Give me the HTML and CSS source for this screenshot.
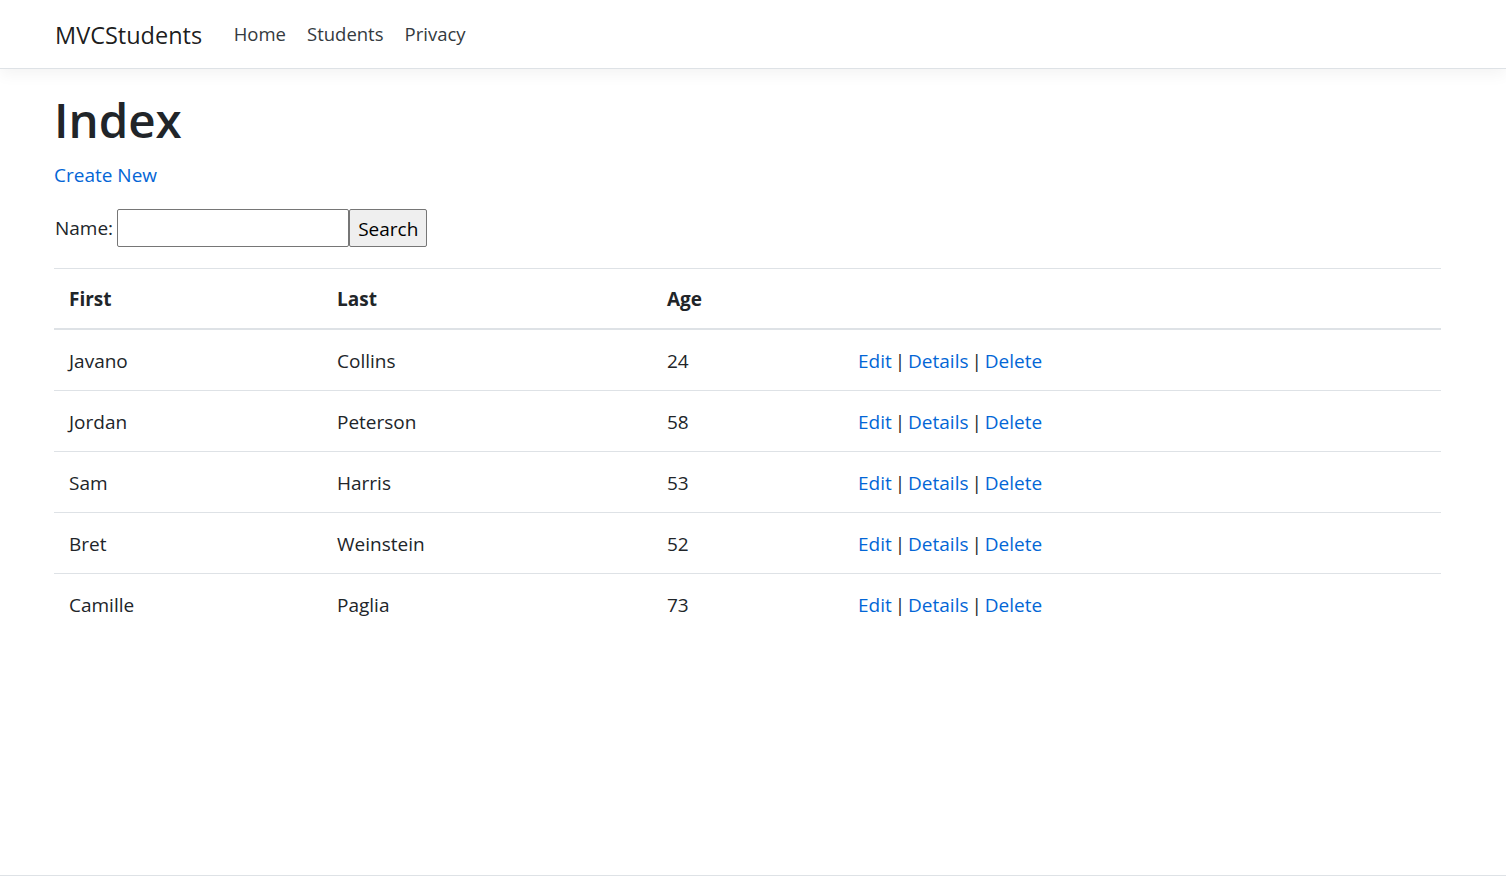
FILE: index.html
```html
<!DOCTYPE html>
<html lang="en">
<head>
<meta charset="utf-8">
<title>Index - MVCStudents</title>
<link rel="stylesheet" href="styles.css">
</head>
<body>
<header class="site-header">
  <nav class="navbar">
    <a class="brand" href="#">MVCStudents</a>
    <ul class="nav-list">
      <li><a class="nav-link" href="#">Home</a></li>
      <li><a class="nav-link" href="#">Students</a></li>
      <li><a class="nav-link" href="#">Privacy</a></li>
    </ul>
  </nav>
</header>
<main class="container">
  <h1 class="page-title">Index</h1>
  <p class="create"><a class="link" href="#">Create New</a></p>
  <form class="search-form">
    <label class="search-label">Name:</label>
    <input class="search-input" type="text">
    <button class="search-btn" type="button">Search</button>
  </form>
  <table class="data-table">
    <thead>
      <tr>
        <th class="col-first">First</th>
        <th class="col-last">Last</th>
        <th class="col-age">Age</th>
        <th class="col-act"></th>
      </tr>
    </thead>
    <tbody>
      <tr><td>Javano</td><td>Collins</td><td>24</td><td class="actions"><a class="link" href="#">Edit</a> | <a class="link" href="#">Details</a> | <a class="link" href="#">Delete</a></td></tr>
      <tr><td>Jordan</td><td>Peterson</td><td>58</td><td class="actions"><a class="link" href="#">Edit</a> | <a class="link" href="#">Details</a> | <a class="link" href="#">Delete</a></td></tr>
      <tr><td>Sam</td><td>Harris</td><td>53</td><td class="actions"><a class="link" href="#">Edit</a> | <a class="link" href="#">Details</a> | <a class="link" href="#">Delete</a></td></tr>
      <tr><td>Bret</td><td>Weinstein</td><td>52</td><td class="actions"><a class="link" href="#">Edit</a> | <a class="link" href="#">Details</a> | <a class="link" href="#">Delete</a></td></tr>
      <tr><td>Camille</td><td>Paglia</td><td>73</td><td class="actions"><a class="link" href="#">Edit</a> | <a class="link" href="#">Details</a> | <a class="link" href="#">Delete</a></td></tr>
    </tbody>
  </table>
</main>
<footer class="site-footer"></footer>
</body>
</html>
```
FILE: styles.css
```css
html, body {
  margin: 0;
  padding: 0;
  height: 100%;
}
body {
  font-family: "Open Sans", "Noto Sans", sans-serif;
  font-size: 19px;
  line-height: 30px;
  color: #212529;
  background: #fff;
  position: relative;
  overflow: hidden;
}
.site-header {
  background: #fff;
  border-bottom: 1px solid #dee2e6;
  box-shadow: 0 5px 15px rgba(0,0,0,0.05);
  position: relative;
  z-index: 1;
}
.navbar {
  display: flex;
  align-items: center;
  height: 68px;
  padding-left: 55px;
  box-sizing: border-box;
}
.brand {
  font-size: 23.5px;
  color: rgba(0,0,0,0.9);
  text-decoration: none;
  margin-right: 21px;
  margin-top: 2px;
}
.nav-list {
  display: flex;
  list-style: none;
  margin: 0;
  padding: 0;
  font-size: 18.5px;
}
.nav-link {
  display: block;
  padding: 0 10.5px;
  color: #343a40;
  text-decoration: none;
}
.container {
  padding: 21px 0 0 54px;
  width: 1387px;
}
.page-title {
  font-size: 47.5px;
  font-weight: 600;
  line-height: 60px;
  margin: 0 0 10px;
}
.create {
  margin: 0 0 20px;
}
.link {
  color: #0366d6;
  text-decoration: none;
}
.search-form {
  display: flex;
  align-items: center;
  margin: -1px 0 21px 1px;
  height: 38px;
}
.search-label {
  margin-right: 4px;
}
.search-input {
  width: 232px;
  height: 38px;
  box-sizing: border-box;
  border: 1px solid #767676;
  border-radius: 2px;
  margin: 0;
  font: inherit;
}
.search-btn {
  height: 38px;
  box-sizing: border-box;
  padding: 1px 8px 0;
  margin: 0;
  border: 1px solid #767676;
  border-radius: 2px;
  background: #efefef;
  font: inherit;
  color: #000;
}
.data-table {
  width: 1387px;
  border-collapse: collapse;
}
.data-table th,
.data-table td {
  text-align: left;
  padding: 16px 15px 14px;
  vertical-align: top;
  border-top: 1px solid #dee2e6;
}
.data-table th {
  font-weight: 700;
  border-bottom: 2px solid #dee2e6;
  padding-top: 15px;
  padding-bottom: 14px;
}
.data-table thead + tbody tr:first-child td {
  border-top: 0;
}
.actions {
  word-spacing: -2px;
}
.col-first { width: 238px; }
.col-last { width: 300px; }
.col-age { width: 161px; }
.site-footer {
  position: absolute;
  left: 0;
  right: 0;
  top: 875px;
  border-top: 1px solid #dee2e6;
  height: 4px;
}
```
